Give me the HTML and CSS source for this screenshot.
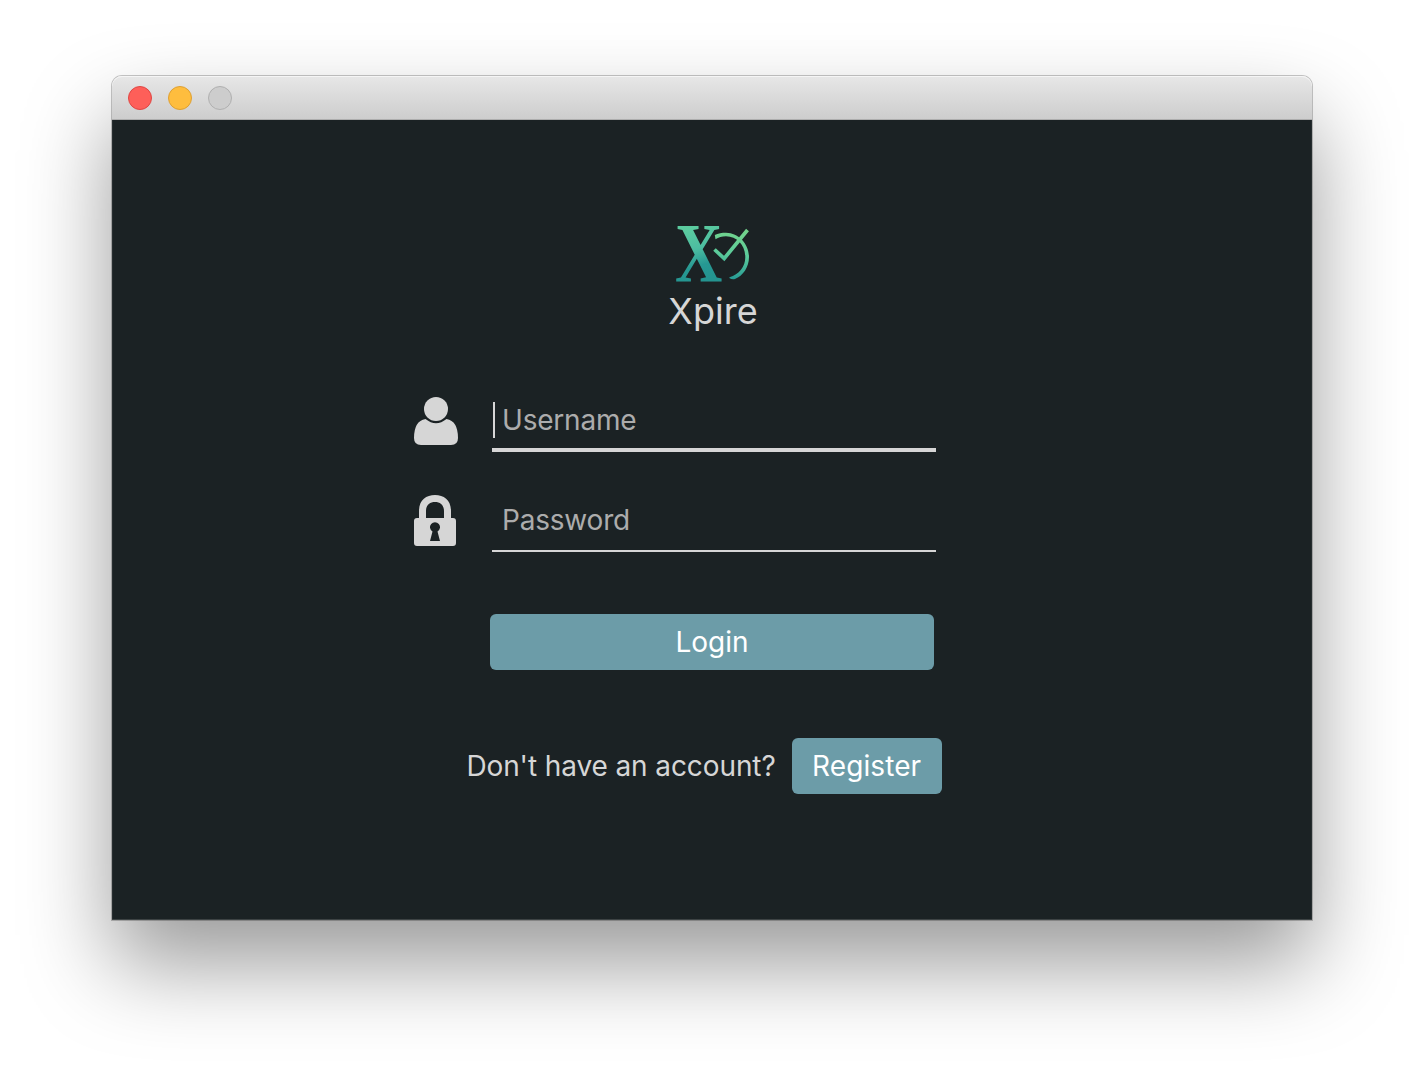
FILE: index.html
```html
<!DOCTYPE html>
<html lang="en">
<head>
<meta charset="utf-8">
<title>Xpire</title>
<link rel="stylesheet" href="styles.css">
</head>
<body>
<main class="window">
  <header class="titlebar">
    <span class="light close"></span>
    <span class="light minimize"></span>
    <span class="light disabled"></span>
  </header>
  <section class="content">
    <svg class="logo" width="76" height="60" viewBox="0 0 76 60" role="img" aria-label="Xpire logo">
      <defs>
        <linearGradient id="letter" gradientUnits="userSpaceOnUse" x1="24" y1="-54" x2="36" y2="-2">
          <stop offset="0" stop-color="#5bcb9f"/>
          <stop offset=".4" stop-color="#4cbda1"/>
          <stop offset=".72" stop-color="#269893"/>
          <stop offset="1" stop-color="#249490"/>
        </linearGradient>
        <linearGradient id="clock" gradientUnits="userSpaceOnUse" x1="64" y1="6" x2="58" y2="54">
          <stop offset="0" stop-color="#72d38c"/>
          <stop offset=".5" stop-color="#5bcb9b"/>
          <stop offset="1" stop-color="#269a94"/>
        </linearGradient>
      </defs>
      <text class="logo-letter" transform="translate(1 57) scale(.79 1.01)" fill="url(#letter)">X</text>
      <path d="M40.800 10C44 8.300 48 7.700 52 7.700C65 8 75 19 75 32C75 42 69 51 61 54Q58 54.800 55.300 53L55.500 52.300C65 49.500 71.300 42 71.300 32.300C71.300 20 63 11.500 52 11.300C48 11.300 44.500 12.300 41.500 14.300Z" fill="url(#clock)"/>
      <path d="M40.500 24.500L50.200 33.500L73.500 5" fill="none" stroke="url(#clock)" stroke-width="3.700"/>
    </svg>
    <h1 class="brand">Xpire</h1>
    <form class="form">
      <div class="row">
        <svg class="icon" width="46" height="52" viewBox="0 0 46 52">
          <circle cx="24" cy="14" r="12"/>
          <path d="M13.500 24Q24 32.500 34.500 24Q46 26 46 43Q46 50 39 50H9Q2 50 2 43Q2 26 13.500 24Z"/>
        </svg>
        <label class="field focused"><i class="caret"></i><input type="text" placeholder="Username"></label>
      </div>
      <div class="row">
        <svg class="icon" width="46" height="54" viewBox="0 0 46 54">
          <path fill-rule="evenodd" d="M2 27Q2 24 5 24H7V17C7 6 14 1 23 1S39 6 39 17V24H41Q44 24 44 27V49Q44 52 41 52H5Q2 52 2 49ZM14 24H32V17C32 11 28 8 23 8S14 11 14 17ZM20.500 37.500L18 47H28L25.500 37.500A5 5 0 1 0 20.500 37.500Z"/>
        </svg>
        <label class="field"><input type="password" placeholder="Password"></label>
      </div>
      <button class="button login" type="button">Login</button>
    </form>
    <div class="signup">
      <span class="question">Don't have an account?</span>
      <button class="button register" type="button">Register</button>
    </div>
  </section>
</main>
</body>
</html>
```
FILE: styles.css
```css
* { box-sizing: border-box; }
body {
  margin: 0;
  height: 1068px;
  padding: 76px 112px 0;
  overflow: hidden;
  background: #fff;
  font-family: Inter, "Liberation Sans", sans-serif;
  font-size: 28px;
  color: #d6d6d6;
}
.window {
  width: 1200px;
  height: 844px;
  border-radius: 10px 10px 0 0;
  box-shadow: 0 0 0 1px rgba(0,0,0,.22), 0 44px 88px rgba(0,0,0,.4);
}
.titlebar {
  height: 44px;
  padding: 0 16px;
  display: flex;
  align-items: center;
  gap: 16px;
  border-radius: 10px 10px 0 0;
  border-bottom: 1px solid #adadad;
  background: linear-gradient(#e7e7e7, #cdcdcd);
  box-shadow: inset 0 1px 0 #f5f5f5;
}
.light { width: 24px; height: 24px; border-radius: 50%; border: 1px solid; }
.close { background: #fe5f59; border-color: #df4744; }
.minimize { background: #febd3e; border-color: #dea033; }
.disabled { background: #cdcdcd; border-color: #b0b0b0; }
.content {
  height: 800px;
  padding-top: 105px;
  display: flex;
  flex-direction: column;
  align-items: center;
  background: #1b2224;
  box-shadow: inset 0 -1px 0 #3d4344, inset 1px 0 0 #262d2f, inset -1px 0 0 #262d2f;
}
.logo { display: block; overflow: visible; }
.logo-letter { font-family: "Liberation Serif", serif; font-weight: 700; font-size: 83px; }
.brand {
  margin: 4px 0 0 2px;
  font-size: 36px;
  line-height: 44px;
  font-weight: 400;
}
.form { width: 524px; margin: 61px 0 0 -76px; }
.row { display: flex; height: 100px; gap: 34px; }
.icon { flex: none; margin-top: 1px; fill: #d6d6d6; }
.row:nth-child(2) .icon { margin-top: 0; }
.field {
  display: flex;
  align-items: center;
  width: 444px;
  flex: none;
  height: 62px;
  margin-top: -4px;
  border-bottom: 2px solid #d6d6d6;
}
.focused { border-bottom-width: 4px; padding-top: 2px; }
.caret { flex: none; width: 2px; height: 36px; margin-left: 1px; margin-right: -3px; background: #d6d6d6; }
input {
  width: 100%;
  padding: 0 10px;
  border: 0;
  outline: 0;
  background: none;
  color: #d6d6d6;
  font: inherit;
  letter-spacing: -.2px;
}
input::placeholder { color: #acacac; opacity: 1; }
.button {
  display: block;
  height: 56px;
  padding: 0;
  border: 0;
  border-radius: 6px;
  background: #6c9ca8;
  color: #fff;
  font: inherit;
}
.login { width: 444px; margin: 20px 0 0 78px; }
.signup { display: flex; align-items: center; gap: 16px; margin: 68px 0 0 -16px; }
.question { letter-spacing: -.1px; }
.register { width: 150px; letter-spacing: .1px; }
```
